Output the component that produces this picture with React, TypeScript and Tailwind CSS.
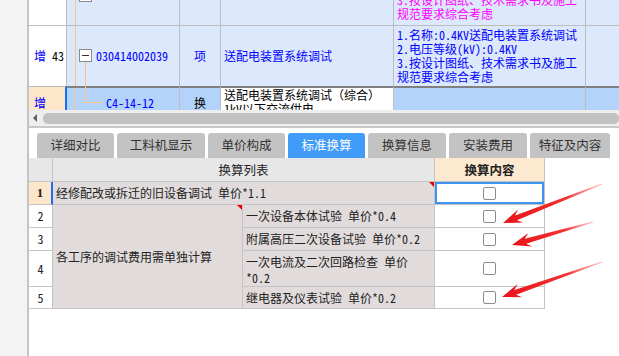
import React from "react";

const song = "font-['Noto_Sans_Mono_CJK_SC','Noto_Sans_CJK_SC',sans-serif]";
const ui = "font-['Noto_Sans_CJK_SC',sans-serif]";

const tabs = [
  { label: "详细对比", w: "w-[77px]" },
  { label: "工料机显示", w: "w-[88px]" },
  { label: "单价构成", w: "w-[77px]" },
  { label: "标准换算", w: "w-[77px]", active: true },
  { label: "换算信息", w: "w-[78px]" },
  { label: "安装费用", w: "w-[78px]" },
  { label: "特征及内容", w: "w-[80px]" },
];

const subRows = [
  { num: "2", text: ["一次设备本体试验 单价*0.4"] },
  { num: "3", text: ["附属高压二次设备试验 单价*0.2"] },
  { num: "4", text: ["一次电流及二次回路检查 单价", "*0.2"], tall: true },
  { num: "5", text: ["继电器及仪表试验 单价*0.2"] },
];

const Check = () => (
  <span className="block w-[13px] h-[13px] rounded-[2px] border border-[#8c8c8c] bg-white" />
);

const RedMark = () => (
  <span className="absolute top-0 right-0 w-0 h-0 border-t-[5px] border-l-[5px] border-t-[#e60000] border-l-transparent" />
);

// tapered annotation arrow, tail -> tip
function arrowPoints(tx: number, ty: number, px: number, py: number) {
  const dx = px - tx;
  const dy = py - ty;
  const len = Math.hypot(dx, dy);
  const ux = dx / len;
  const uy = dy / len;
  const nx = -uy;
  const ny = ux;
  const head = 17;
  const hw = 7;
  const bx = px - ux * head;
  const by = py - uy * head;
  const p = (x: number, y: number) => `${x.toFixed(1)},${y.toFixed(1)}`;
  return [
    p(tx + nx * 0.6, ty + ny * 0.6),
    p(bx + ux * 3 + nx * 2.6, by + uy * 3 + ny * 2.6),
    p(bx - ux * 2 + nx * hw, by - uy * 2 + ny * hw),
    p(px, py),
    p(bx - ux * 2 - nx * hw, by - uy * 2 - ny * hw),
    p(bx + ux * 3 - nx * 2.6, by + uy * 3 - ny * 2.6),
    p(tx - nx * 0.6, ty - ny * 0.6),
  ].join(" ");
}

const arrows = [
  [602, 184, 503, 223],
  [593, 222, 512, 245],
  [602, 262, 502, 297],
];

export default function App() {
  return (
    <div className={`relative w-[619px] h-[356px] overflow-hidden bg-white flex text-[12px] ${song}`}>
      <div className="w-[29px] shrink-0 bg-[#f3f3f3] border-r-2 border-[#c4c4c4]" />

      <div className="flex-1 flex flex-col min-w-0">
        {/* upper list */}
        <div className="h-[110px] overflow-hidden flex flex-col leading-[14px]">
          <div className="grid grid-cols-[38px_113px_41px_173px_192px_1fr] h-[26px] shrink-0">
            <div className="bg-white border-r border-b border-[#bdbdbd]" />
            <div className="relative bg-[#dce8fb] border-r border-b border-[#bdbdbd]">
              <span className="absolute left-[8px] top-0 bottom-0 w-px bg-[#fcc47e]" />
              <span className="absolute left-[12px] -top-[11px] w-[13px] h-[13px] border border-[#8a8a8a] bg-white" />
            </div>
            <div className="bg-[#dce8fb] border-r border-b border-[#bdbdbd]" />
            <div className="bg-[#dce8fb] border-r border-b border-[#bdbdbd]" />
            <div className="bg-[#dce8fb] border-r border-b border-[#bdbdbd] overflow-hidden px-[3px] text-[#ff00ff]">
              <div className="-mt-[7px] whitespace-nowrap">
                <div>3.按设计图纸、技术需求书及施工</div>
                <div>规范要求综合考虑</div>
              </div>
            </div>
            <div className="bg-[#dce8fb] border-b border-[#bdbdbd]" />
          </div>

          <div className="grid grid-cols-[38px_113px_41px_173px_192px_1fr] h-[60px] shrink-0">
            <div className="bg-white border-r border-[#bdbdbd] flex items-center pl-[5px] gap-[6px]">
              <span className="text-[#0000ff]">增</span>
              <span className="text-black">43</span>
            </div>
            <div className="relative bg-[#dce8fb] border-r border-[#bdbdbd] flex items-center pl-[29px] text-[#0000ff]">
              <span className="absolute left-[8px] top-0 bottom-0 w-px bg-[#fcc47e]" />
              <span className="absolute left-[18px] top-[35px] bottom-0 w-px bg-[#fcc47e]" />
              <span className="absolute left-[12px] top-[23px] w-[13px] h-[13px] border border-[#8a8a8a] bg-white flex items-center justify-center">
                <span className="w-[7px] h-px bg-[#333]" />
              </span>
              030414002039
            </div>
            <div className="bg-[#dce8fb] border-r border-[#bdbdbd] flex items-center justify-center text-[#0000ff]">项</div>
            <div className="bg-[#dce8fb] border-r border-[#bdbdbd] flex items-center px-[3px] text-[#0000ff] whitespace-nowrap">送配电装置系统调试</div>
            <div className="bg-[#dce8fb] border-r border-[#bdbdbd] px-[3px] pt-[2px] text-[#0000ff] whitespace-nowrap">
              <div>1.名称:0.4KV送配电装置系统调试</div>
              <div>2.电压等级(kV):0.4KV</div>
              <div>3.按设计图纸、技术需求书及施工</div>
              <div>规范要求综合考虑</div>
            </div>
            <div className="bg-[#dce8fb]" />
          </div>

          <div className="grid grid-cols-[38px_113px_41px_173px_192px_1fr] flex-1">
            <div className="bg-[#fde6c9] border-t border-r-2 border-t-[#bdbdbd] border-r-[#1a6ef5] pl-[5px] pt-[9px] text-[#0000ff]">增</div>
            <div className="relative bg-[#b4d3fb] border-t-2 border-r border-t-[#808080] border-r-[#bdbdbd] pl-[39px] pt-[8px] text-[#0000ff]">
              <span className="absolute left-[8px] top-0 bottom-0 w-px bg-[#fcc47e]" />
              <span className="absolute left-[18px] -top-[2px] h-[17px] w-px bg-[#fcc47e]" />
              <span className="absolute left-[18px] top-[14px] w-[17px] h-px bg-[#fcc47e]" />
              C4-14-12
            </div>
            <div className="bg-[#b4d3fb] border-t-2 border-r border-t-[#808080] border-r-[#bdbdbd] flex justify-center pt-[8px] text-black">换</div>
            <div className="bg-white border-t-2 border-r border-t-[#808080] border-r-[#bdbdbd] px-[3px] text-black whitespace-nowrap overflow-hidden">
              <div>送配电装置系统调试（综合）</div>
              <div>1kV以下交流供电</div>
            </div>
            <div className="bg-[#b4d3fb] border-t-2 border-r border-t-[#808080] border-r-[#bdbdbd]" />
            <div className="bg-[#b4d3fb] border-t-2 border-t-[#808080]" />
          </div>
        </div>

        {/* horizontal scrollbar */}
        <div className="h-[16px] shrink-0 bg-[#eeeeee] flex items-center pl-[4px]">
          <span className="w-0 h-0 border-y-[4px] border-r-[4px] border-y-transparent border-r-[#606060]" />
          <span className="ml-[6px] flex-1 h-[11px] rounded-[5px] bg-[#c2c2c2]" />
        </div>
        <div className="h-[2px] shrink-0 bg-[#c8c8c8]" />

        {/* tabs */}
        <div className={`flex gap-[3px] pl-[8px] pt-[5px] h-[30px] shrink-0 ${ui}`}>
          {tabs.map((t) => (
            <div
              key={t.label}
              className={`${t.w} rounded-t-[3px] flex items-center justify-center text-[12.5px] ${
                t.active ? "bg-[#409cf8] text-white" : "bg-[#c3c3c3] text-[#333]"
              }`}
            >
              {t.label}
            </div>
          ))}
        </div>

        {/* conversion table */}
        <div className="grid grid-cols-[24px_190px_192px_110px] grid-rows-[24px_23px_23px_23px_36px_22px] text-[#222] leading-[16px]">
          <div className="bg-[#e7e7e7] border-r border-b border-[#c4c4c4]" />
          <div className={`col-span-2 bg-[#e7e7e7] border-r border-b border-[#c4c4c4] flex items-center justify-center text-[12.5px] ${ui}`}>换算列表</div>
          <div className={`bg-[#fde9cf] border-r border-b border-[#c4c4c4] flex items-center justify-center font-bold text-[12.5px] ${ui}`}>换算内容</div>

          <div className="bg-[#fde6c9] border-r-2 border-b border-r-[#1a6ef5] border-b-[#c4c4c4] flex items-center justify-center font-bold font-['Liberation_Serif',serif] text-[13px]">1</div>
          <div className="relative col-span-2 bg-[#e1dcdb] border-r border-b border-[#c4c4c4] flex items-center px-[3px] whitespace-nowrap">
            经修配改或拆迁的旧设备调试 单价*1.1
            <RedMark />
          </div>
          <div className="bg-white border-r border-b border-[#c4c4c4] ring-2 ring-inset ring-[#3d93f2] flex items-center justify-center">
            <Check />
          </div>

          {subRows.map((r, i) => (
            <React.Fragment key={r.num}>
              <div className="bg-white border-r border-b border-[#c4c4c4] flex items-center justify-center">{r.num}</div>
              {i === 0 && (
                <div className="relative row-span-4 bg-[#e1dcdb] border-r border-b border-[#c4c4c4] flex items-center px-[3px] whitespace-nowrap">
                  各工序的调试费用需单独计算
                  <RedMark />
                </div>
              )}
              <div
                className={`bg-[#e1dcdb] border-r border-b border-[#c4c4c4] px-[3px] whitespace-nowrap flex flex-col ${
                  r.tall ? "pt-[3px]" : "justify-center"
                }`}
              >
                {r.text.map((l) => (
                  <div key={l}>{l}</div>
                ))}
              </div>
              <div className="bg-white border-r border-b border-[#c4c4c4] flex items-center justify-center">
                <Check />
              </div>
            </React.Fragment>
          ))}
        </div>
      </div>

      <svg className="absolute inset-0 pointer-events-none" width="619" height="356">
        <defs>
          {arrows.map(([tx, ty, px, py], i) => (
            <linearGradient key={i} id={`ag${i}`} gradientUnits="userSpaceOnUse" x1={tx} y1={ty} x2={px} y2={py}>
              <stop offset="0" stopColor="#ff8a8a" stopOpacity="0.5" />
              <stop offset="0.35" stopColor="#f23030" />
              <stop offset="1" stopColor="#e8141a" />
            </linearGradient>
          ))}
        </defs>
        {arrows.map(([tx, ty, px, py], i) => (
          <polygon key={i} points={arrowPoints(tx, ty, px, py)} fill={`url(#ag${i})`} />
        ))}
      </svg>
    </div>
  );
}
